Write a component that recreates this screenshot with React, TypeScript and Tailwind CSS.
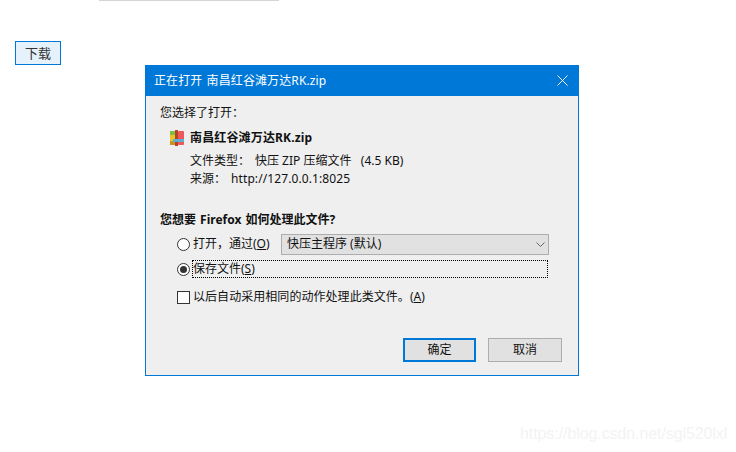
export default function App() {
  const font = { fontFamily: '"Noto Sans", "Noto Sans CJK SC", sans-serif' };
  return (
    <div className="relative w-[736px] h-[452px] bg-white overflow-hidden text-[12px] text-[#111]" style={font}>
      <div className="ml-[99px] w-[180px] h-px bg-[#d4d4d4]" />
      <button className="ml-[15px] mt-[40px] w-[46px] h-[24px] block border border-[#0078d7] bg-[#e5f1fb] text-[13px] text-[#333] leading-[20px]">下载</button>

      <div className="absolute left-[145px] top-[65px] w-[434px] h-[311px] border border-[#0078d7] bg-[#efefef] flex flex-col">
        <div className="h-[30px] shrink-0 bg-[#0078d7] flex items-center justify-between pl-[8px] pr-[10px] text-white text-[12px]">
          <span className="tracking-[0.1px] [word-spacing:1px]">正在打开 南昌红谷滩万达RK.zip</span>
          <svg className="-mt-[1px]" width="11" height="11" viewBox="0 0 11 11" fill="none" stroke="white" strokeWidth="1"><path d="M0.5 0.5 L10.5 10.5 M10.5 0.5 L0.5 10.5" /></svg>
        </div>
        <div className="flex-1 flex flex-col pl-[14px] pr-[16px]">
          <div className="mt-[8px] h-[18px] leading-[18px]">您选择了打开：</div>
          <div className="mt-[7px] ml-[10px] h-[18px] flex items-center gap-[6px]">
            <svg width="14" height="16" viewBox="0 0 14 16">
              <rect x="0" y="1" width="5" height="14" fill="#e8c52a" />
              <rect x="0" y="1" width="5" height="4" fill="#7fbf3f" />
              <rect x="0" y="11" width="5" height="4" fill="#c8931e" />
              <rect x="5" y="0" width="3" height="16" fill="#b5432a" />
              <rect x="8" y="1" width="6" height="14" rx="1" fill="#ee5a5a" />
              <rect x="3" y="9" width="11" height="3" fill="#5fb0d0" />
            </svg>
            <span className="font-bold tracking-[0.15px]">南昌红谷滩万达RK.zip</span>
          </div>
          <div className="mt-[5px] ml-[30px] h-[18px] leading-[18px] flex">
            <span className="w-[65px]">文件类型：</span><span className="whitespace-pre">快压 ZIP 压缩文件   (4.5 KB)</span>
          </div>
          <div className="ml-[30px] h-[18px] leading-[18px] flex">
            <span className="w-[41px]">来源：</span><span className="tracking-[0.1px]">http://127.0.0.1:8025</span>
          </div>
          <div className="mt-[23px] h-[18px] leading-[18px] font-bold [word-spacing:1px]">您想要 Firefox 如何处理此文件?</div>

          <div className="mt-[4px] ml-[17px] flex items-center h-[22px]">
            <span className="w-[13px] h-[13px] rounded-full border border-[#333] bg-white shrink-0" />
            <span className="ml-[3px] w-[88px]">打开，通过(<u>O</u>)</span>
            <div className="w-[268px] h-[21px] border border-[#adadad] bg-[#e1e1e1] flex items-center justify-between pl-[5px] pr-[3px]">
              <span>快压主程序 (默认)</span>
              <svg width="9" height="5" viewBox="0 0 9 5" fill="none" stroke="#666" strokeWidth="1"><path d="M0.5 0.5 L4.5 4.5 L8.5 0.5" /></svg>
            </div>
          </div>
          <div className="mt-[5px] ml-[17px] flex items-center h-[18px]">
            <span className="w-[13px] h-[13px] rounded-full border border-[#333] bg-white shrink-0 flex items-center justify-center">
              <span className="w-[7px] h-[7px] rounded-full bg-[#333]" />
            </span>
            <span className="ml-[2px] w-[356px] h-[18px] leading-[16px] border border-dotted border-black">保存文件(<u>S</u>)</span>
          </div>
          <div className="mt-[10px] ml-[17px] flex items-center h-[18px]">
            <span className="w-[13px] h-[13px] border border-[#333] bg-white shrink-0" />
            <span className="ml-[3px] tracking-[0.05px]">以后自动采用相同的动作处理此类文件。(<u>A</u>)</span>
          </div>

          <div className="mt-auto mb-[13px] flex justify-end gap-[12px]">
            <button className="w-[73px] h-[24px] border-2 border-[#0078d7] bg-[#e1e1e1] text-[12px]">确定</button>
            <button className="w-[74px] h-[24px] border border-[#adadad] bg-[#e1e1e1] text-[12px]">取消</button>
          </div>
        </div>
      </div>

      <div className="absolute left-[520px] top-[422px] text-[15.8px] text-[#f3f3f3]" style={{ fontFamily: '"Liberation Sans", sans-serif' }}>https://blog.csdn.net/sgl520lxl</div>
    </div>
  );
}
